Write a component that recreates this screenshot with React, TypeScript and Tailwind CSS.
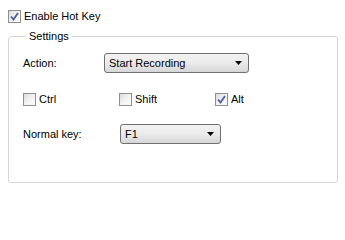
import React from 'react';

const font = { fontFamily: '"Liberation Sans", Arial, sans-serif' };

function CheckBox({ checked, label, className = '' }: { checked?: boolean; label: string; className?: string }) {
  return (
    <div className={`flex items-center ${className}`}>
      <div className="flex h-[13px] w-[13px] items-center justify-center border border-[#8e8f8f] bg-gradient-to-br from-[#dcdcdc] via-[#f2f2f2] to-[#fcfcfc]">
        {checked && (
          <svg width="9" height="9" viewBox="0 0 9 9">
            <path d="M1 4.5 L3.5 7.5 L8 1" fill="none" stroke="#4a5f97" strokeWidth="1.8" />
          </svg>
        )}
      </div>
      <span className="ml-[3px] text-[11px] leading-none text-black">{label}</span>
    </div>
  );
}

function Combo({ value, width }: { value: string; width: string }) {
  return (
    <div
      className={`flex h-[20px] ${width} items-center justify-between rounded-[3px] border border-[#707070] bg-gradient-to-b from-[#f2f2f2] via-[#ebebeb] to-[#d6d6d6] pl-[4px] pr-[6px]`}
    >
      <span className="text-[11px] leading-none text-black">{value}</span>
      <svg width="7" height="4" viewBox="0 0 7 4">
        <path d="M0 0 H7 L3.5 4 Z" fill="#000" />
      </svg>
    </div>
  );
}

export default function App() {
  return (
    <div className="h-[200px] w-[345px] bg-white pl-[8px] pt-[10px]" style={font}>
      <CheckBox checked label="Enable Hot Key" />
      <fieldset className="mt-[8px] h-[152px] w-[330px] rounded-[3px] border border-[#d5d5d5] px-[14px] pt-[11px]">
        <legend className="ml-[3px] px-[3px] text-[11px] leading-none text-black">Settings</legend>
        <div className="flex items-center">
          <span className="w-[81px] text-[11px] leading-none text-black">Action:</span>
          <Combo value="Start Recording" width="w-[145px]" />
        </div>
        <div className="mt-[20px] flex items-center">
          <CheckBox label="Ctrl" className="w-[96px]" />
          <CheckBox label="Shift" className="w-[96px]" />
          <CheckBox checked label="Alt" />
        </div>
        <div className="mt-[18px] flex items-center">
          <span className="w-[97px] text-[11px] leading-none text-black">Normal key:</span>
          <Combo value="F1" width="w-[101px]" />
        </div>
      </fieldset>
    </div>
  );
}
